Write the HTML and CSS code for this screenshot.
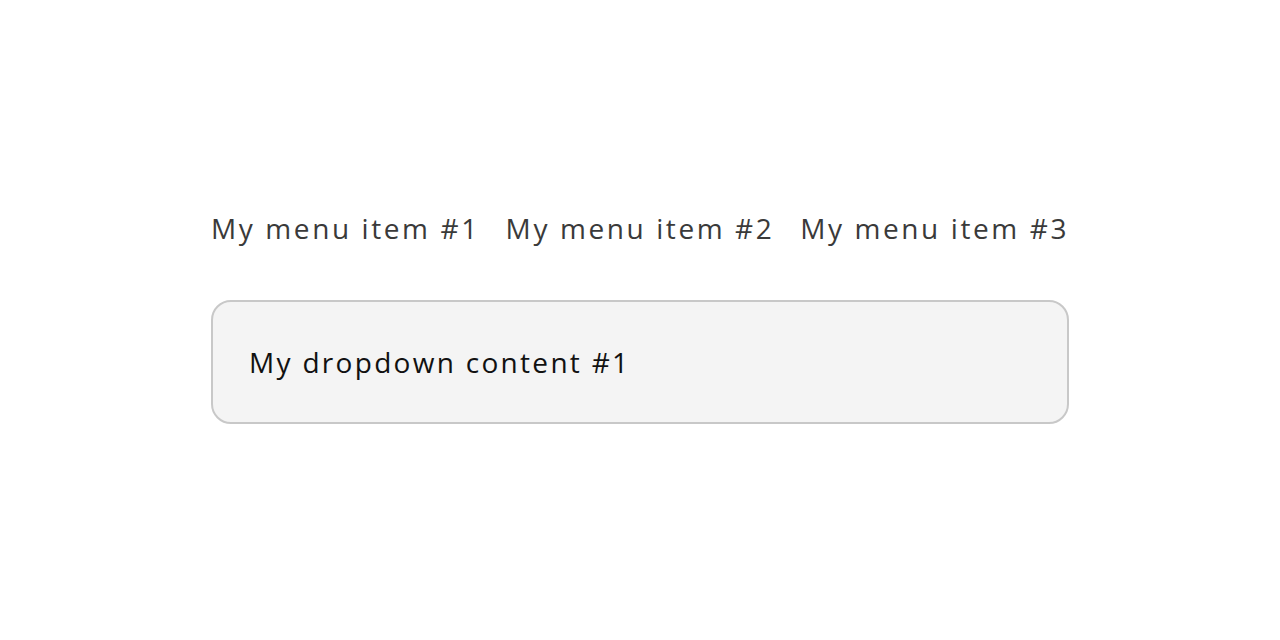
FILE: index.html
```html
<!DOCTYPE html>
<html>
<head>
<meta charset="utf-8">
<link rel="stylesheet" href="styles.css">
</head>
<body>
<div class="wrap">
  <nav class="menu">
    <span class="item">My menu item #1</span>
    <span class="item">My menu item #2</span>
    <span class="item">My menu item #3</span>
  </nav>
  <div class="dropdown">My dropdown content #1</div>
</div>
</body>
</html>
```
FILE: styles.css
```css
html, body {
  margin: 0;
  padding: 0;
  background: #ffffff;
}
body {
  font-family: "Open Sans", "Noto Sans", sans-serif;
}
.wrap {
  width: 858px;
  margin: 0 auto;
  padding-top: 208px;
}
.menu {
  display: flex;
  justify-content: space-between;
  height: 40px;
  align-items: center;
}
.item {
  font-size: 28px;
  letter-spacing: 2.6px;
  color: #3a3a3a;
  line-height: 40px;
}
.dropdown {
  margin-top: 52px;
  box-sizing: border-box;
  height: 124px;
  border: 2px solid #c8c8c8;
  border-radius: 20px;
  background: #f4f4f4;
  padding: 0 36px;
  display: flex;
  align-items: center;
  font-size: 28px;
  letter-spacing: 2.3px;
  color: #111111;
}
```
